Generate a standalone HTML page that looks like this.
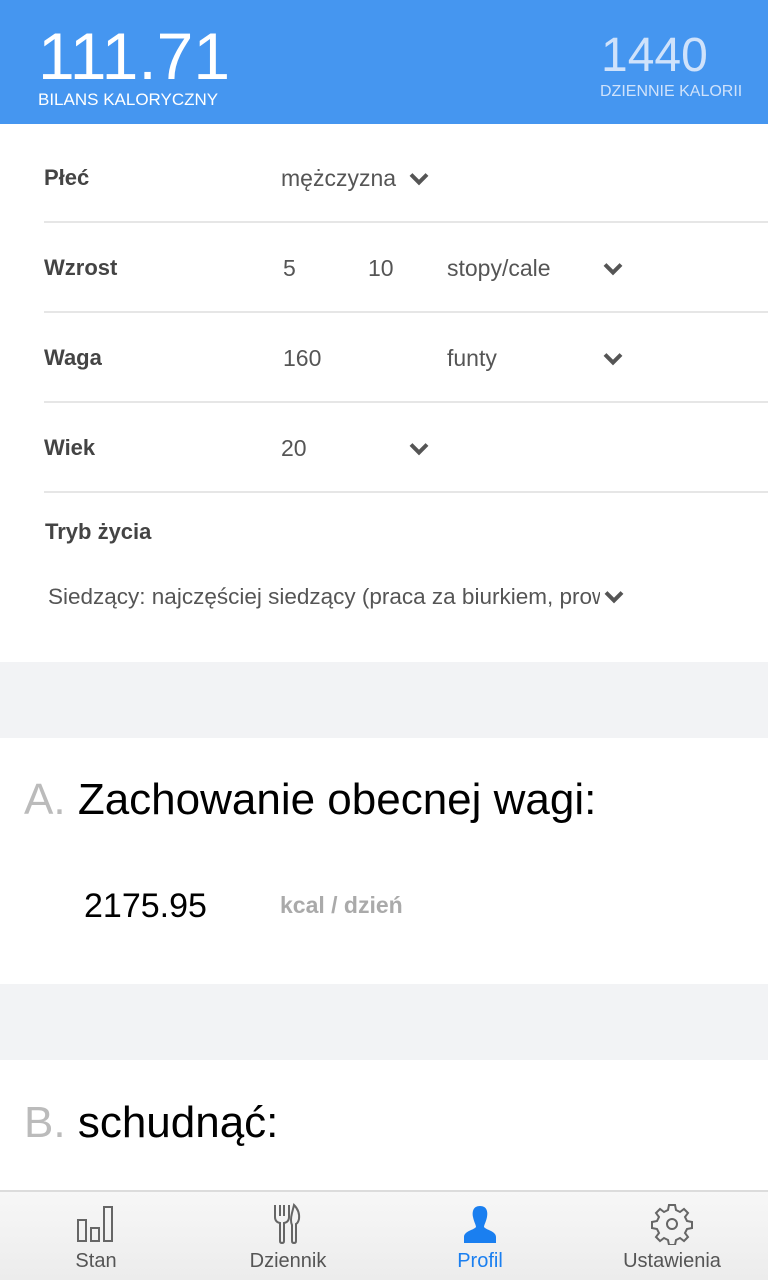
<!DOCTYPE html>
<html><head><meta charset="utf-8"><style>
*{margin:0;padding:0;box-sizing:border-box}
body{width:768px;height:1280px;overflow:hidden;font-family:"Liberation Sans",sans-serif;background:#fff;position:relative}
.a{position:absolute;white-space:nowrap}
.hdr{position:absolute;left:0;top:0;width:768px;height:124px;background:#4596F0}
.lbl{font-weight:bold;font-size:22px;color:#444}
.val{font-size:23px;color:#555}
.line{position:absolute;left:44px;right:0;height:2px;background:#e6e6e6}
.chev{position:absolute;width:22px;height:14px}
.gray{position:absolute;left:0;width:768px;background:#F2F3F5}
.nav{position:absolute;left:0;top:1190px;width:768px;height:90px;background:linear-gradient(#f7f7f7,#ececec);border-top:2px solid #dcdcdc}
.nl{position:absolute;top:1250px;font-size:20px;color:#555;transform:translateX(-50%)}
</style></head><body>
<div class="hdr"></div>
<div class="a" style="left:38px;top:18px;font-size:66px;color:#fff;line-height:76px">111.71</div>
<div class="a" style="left:38px;top:90px;font-size:17px;color:#fff">BILANS KALORYCZNY</div>
<div class="a" style="left:601px;top:30px;font-size:48px;color:#cfe2fb;line-height:52px">1440</div>
<div class="a" style="left:600px;top:83px;font-size:16px;color:#cfe2fb">DZIENNIE KALORII</div>

<svg width="0" height="0" style="position:absolute"><defs><symbol id="cv" viewBox="0 0 22 14"><path d="M3 2.5 L11 10.5 L19 2.5" fill="none" stroke="#555" stroke-width="4"/></symbol></defs></svg>

<div class="a lbl" style="left:44px;top:165px">Płeć</div>
<div class="a val" style="left:281px;top:165px">mężczyzna</div>
<svg class="chev" style="left:408px;top:172px"><use href="#cv"/></svg>
<div class="line" style="top:221px"></div>

<div class="a lbl" style="left:44px;top:255px">Wzrost</div>
<div class="a val" style="left:283px;top:255px">5</div>
<div class="a val" style="left:368px;top:255px">10</div>
<div class="a val" style="left:447px;top:255px">stopy/cale</div>
<svg class="chev" style="left:602px;top:262px"><use href="#cv"/></svg>
<div class="line" style="top:311px"></div>

<div class="a lbl" style="left:44px;top:345px">Waga</div>
<div class="a val" style="left:283px;top:345px">160</div>
<div class="a val" style="left:447px;top:345px">funty</div>
<svg class="chev" style="left:602px;top:352px"><use href="#cv"/></svg>
<div class="line" style="top:401px"></div>

<div class="a lbl" style="left:44px;top:435px">Wiek</div>
<div class="a val" style="left:281px;top:435px">20</div>
<svg class="chev" style="left:408px;top:442px"><use href="#cv"/></svg>
<div class="line" style="top:491px"></div>

<div class="a lbl" style="left:45px;top:519px">Tryb życia</div>
<div class="a val" style="left:48px;top:584px;width:552px;overflow:hidden;font-size:22.5px">Siedzący: najczęściej siedzący (praca za biurkiem, prowadzenie)</div>
<svg class="chev" style="left:603px;top:590px"><use href="#cv"/></svg>

<div class="gray" style="top:662px;height:76px"></div>
<div class="a" style="left:24px;top:774px;font-size:44px;line-height:52px"><span style="color:#bbb">A.</span> <span style="color:#000">Zachowanie obecnej wagi:</span></div>
<div class="a" style="left:84px;top:887px;font-size:34px;color:#000">2175.95</div>
<div class="a" style="left:280px;top:892px;font-size:23px;font-weight:bold;color:#aaa">kcal / dzień</div>

<div class="gray" style="top:984px;height:76px"></div>
<div class="a" style="left:24px;top:1097px;font-size:44px;line-height:52px"><span style="color:#bbb">B.</span> <span style="color:#000">schudnąć:</span></div>

<div class="nav"></div>
<svg class="a" style="left:76px;top:1204px" width="40" height="40" viewBox="0 0 40 40" fill="none" stroke="#666" stroke-width="2"><rect x="2" y="16" width="8" height="21"/><rect x="15" y="24" width="8" height="13"/><rect x="28" y="3" width="8" height="34"/></svg>
<svg class="a" style="left:272px;top:1203px" width="30" height="42" viewBox="0 0 30 42" fill="none" stroke="#666" stroke-width="2"><path d="M3 2 V14 Q3 19 8 20 V38 Q8 40 10 40 Q12 40 12 38 V20 Q17 19 17 14 V2 M8 2 V13 M12 2 V13"/><path d="M22 2 Q28 8 27 16 Q26 20 24 21 V38 Q24 40 22 40 Q20 40 20 38 V22 Q18 18 20 10 Z"/></svg>
<svg class="a" style="left:462px;top:1205px" width="36" height="38" viewBox="0 0 36 38"><path fill="#1a7ff0" d="M18 1 C11 1 10 7 11 12 C12 17 14 20 14 22 C12 25 2 26 2 32 V38 H34 V32 C34 26 24 25 22 22 C22 20 24 17 25 12 C26 7 25 1 18 1 Z"/></svg>
<svg class="a" style="left:651px;top:1203px" width="42" height="42" viewBox="0 0 42 42" fill="none" stroke="#666" stroke-width="2"><path d="M18 2h6l1 5 4 2 4-3 4 4-3 4 2 4 5 1v6l-5 1-2 4 3 4-4 4-4-3-4 2-1 5h-6l-1-5-4-2-4 3-4-4 3-4-2-4-5-1v-6l5-1 2-4-3-4 4-4 4 3 4-2z"/><circle cx="21" cy="21" r="5"/></svg>
<div class="nl" style="left:96px">Stan</div>
<div class="nl" style="left:288px">Dziennik</div>
<div class="nl" style="left:480px;color:#1a7ff0">Profil</div>
<div class="nl" style="left:672px">Ustawienia</div>
</body></html>
